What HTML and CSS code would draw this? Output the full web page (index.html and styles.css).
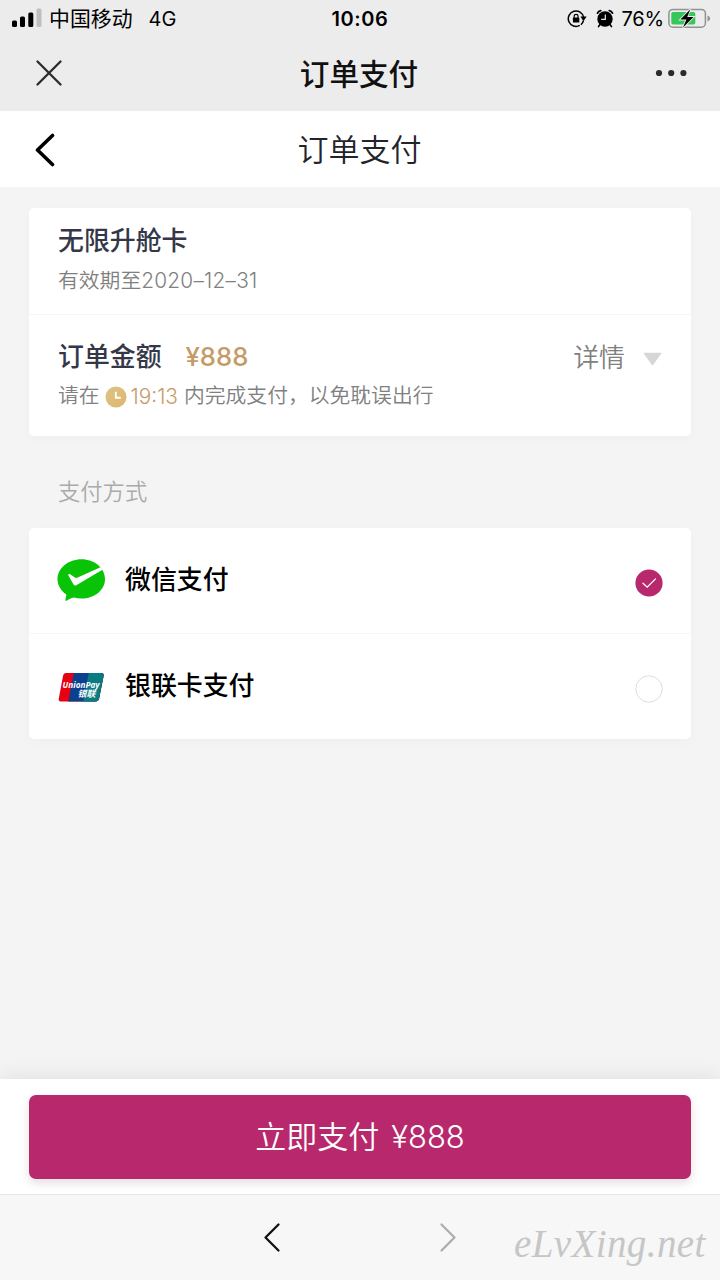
FILE: index.html
```html
<!DOCTYPE html>
<html lang="zh-CN">
<head>
<meta charset="utf-8">
<title>订单支付</title>
<link rel="stylesheet" href="styles.css">
</head>
<body>
<div class="app">
  <header class="system">
    <div class="status">
      <div class="status-left">
        <svg class="signal" width="30" height="20" viewBox="0 0 30 20"><rect x="0" y="12.5" width="5" height="6.5" rx="1.5"/><rect x="8" y="8.5" width="5" height="10.5" rx="1.5"/><rect x="16.3" y="4.5" width="5" height="14.5" rx="1.5"/><rect x="24.5" y="0.5" width="5" height="18.5" rx="1.5" fill="#bfbfbf"/></svg>
        <span class="carrier">中国移动</span><span class="network">4G</span>
      </div>
      <div class="time">10:06</div>
      <div class="status-right">
        <svg width="20" height="20" viewBox="0 0 20 20"><path d="M12.8 16.4A7.7 7.7 0 1 1 16.6 8.4" fill="none" stroke="#000" stroke-width="1.5"/><path d="M13.9 15.8A7.7 7.7 0 0 0 16.4 11.8" fill="none" stroke="#000" stroke-width="1.5"/><path d="M13.400 7.600h6.200l-3.100 4.700z"/><rect x="5.9" y="8.6" width="6.4" height="5" rx=".7"/><path d="M7.2 9V7.3a1.9 1.9 0 0 1 3.8 0V9" fill="none" stroke="#000" stroke-width="1.2"/></svg>
        <svg class="alarm" width="18" height="20" viewBox="0 0 18 20"><circle cx="9" cy="10" r="7.700"/><path d="M1.500 4.100q1-2.100 3.200-2.500M16.500 4.100q-1-2.100-3.200-2.500" fill="none" stroke="#000" stroke-width="1.800" stroke-linecap="round"/><path d="m3.800 15.700-1.300 1.900M14.200 15.700l1.300 1.900" stroke="#000" stroke-width="1.600" stroke-linecap="round"/><path d="M9.300 5.400v5H5.200" fill="none" stroke="#ececec" stroke-width="1.200"/></svg>
        <span class="percent">76%</span>
        <svg class="battery" width="43" height="22" viewBox="0 0 43 22"><rect x=".9" y="1.4" width="36.500" height="17.800" rx="4" fill="none" stroke="#929292" stroke-width="1.500"/><rect x="3.300" y="4" width="24" height="12.600" rx="1.800" fill="#35c759"/><path d="M39.500 7.500v6c1.800-.8 2.600-1.800 2.600-3s-.8-2.200-2.600-3z" fill="#929292"/><path d="m22.400 1.200-10 10.400h6l-3.400 8 10.500-10.600h-6.300z" fill="#000" stroke="#ececec" stroke-width="1.800" paint-order="stroke"/></svg>
      </div>
    </div>
    <div class="navbar">
      <svg class="close" width="26" height="26" viewBox="0 0 26 26"><path d="M1.500 1.500 24.500 24.500M24.500 1.500 1.500 24.500" stroke="#2b2b2b" stroke-width="2.300" stroke-linecap="round"/></svg>
      <h1 class="nav-title">订单支付</h1>
      <svg class="more" width="32" height="8" viewBox="0 0 32 8" fill="#2b2b2b"><circle cx="4" cy="4" r="3.100"/><circle cx="16.200" cy="4" r="3.100"/><circle cx="28.400" cy="4" r="3.100"/></svg>
    </div>
  </header>

  <div class="page-header">
    <svg class="back" width="20" height="34" viewBox="0 0 20 34"><path d="M17.500 2.500 2.500 17l15 14.500" fill="none" stroke="#000" stroke-width="3.600" stroke-linecap="round" stroke-linejoin="round"/></svg>
    <h2 class="page-title">订单支付</h2>
  </div>

  <main class="content">
    <section class="card">
      <div class="product">
        <div class="label">无限升舱卡</div>
        <div class="note">有效期至<span class="date">2020–12–31</span></div>
      </div>
      <div class="order">
        <div class="amount-row">
          <span class="label">订单金额</span><span class="amount">¥888</span>
          <span class="detail">详情</span>
          <svg class="arrow" width="19" height="14" viewBox="0 0 19 14"><path d="M1 .7h17q.8 0 .3.7l-8 11.300q-.8 1.100-1.600 0L.7 1.400Q.2.700 1 .7z" fill="#d6d6d6"/></svg>
        </div>
        <div class="note deadline">
          <span>请在</span>
          <svg class="clock" width="22" height="22" viewBox="0 0 22 22"><defs><linearGradient id="gold" x1="0" y1="0" x2="1" y2="1"><stop offset="0" stop-color="#dcc387"/><stop offset="1" stop-color="#dfb66c"/></linearGradient></defs><circle cx="11" cy="11" r="10.500" fill="url(#gold)"/><path d="M10.800 5.700v6.100h5" fill="none" stroke="#fff" stroke-width="1.900"/></svg>
          <span class="countdown">19:13</span><span>内完成支付，以免耽误出行</span>
        </div>
      </div>
    </section>

    <h3 class="section-title">支付方式</h3>
    <section class="card methods">
      <div class="method">
        <svg class="logo wechat" width="49" height="44" viewBox="0 0 49 44"><path d="M24.500 1.200C37.500 1.200 48 10 48 21S37.500 40.600 24.500 40.600c-2.700 0-5.200-.3-7.500-1-2.800.6-5.200 2-7.500 3.100-.8.300-1.300-.1-1.100-.9l1-5.200C4 33 .5 27.400 .5 21 .5 10 11.500 1.200 24.500 1.200z" fill="#09c306"/><path d="M11.400 17.400c-.5-1.200.8-1.800 1.700-1.200l4.800 3.300c.8.500 1.800.5 2.800 0L43.500 9.300q1.300 1 2 2.400L19.700 26.900c-1.400.9-2.600.8-3.300-.6z" fill="#fff"/></svg>
        <span class="method-name">微信支付</span>
        <svg class="radio" width="28" height="28" viewBox="0 0 28 28"><circle cx="14" cy="14" r="13.600" fill="#b7296c"/><path d="m8 14.200 4.200 4 8.300-8.300" fill="none" stroke="#fff" stroke-width="1.300" stroke-linecap="round"/></svg>
      </div>
      <div class="method">
        <svg class="logo" width="49" height="44" viewBox="0 0 49 44"><defs><clipPath id="card-shape"><path d="M9 7h35q3.300 0 2.600 3l-4.500 22.600q-.6 3-3.600 3h-34q-3.400 0-2.700-3L6 10q.6-3 3-3z"/></clipPath></defs><g clip-path="url(#card-shape)"><path d="M0 6h49v31H0z" fill="#e60012"/><path d="M17 6h32v31H11z" fill="#0b408f"/><path d="M32 6h17v31H26z" fill="#087c80"/></g><text class="up-latin" x="5.600" y="21.500" textLength="37" lengthAdjust="spacingAndGlyphs">UnionPay</text><text class="up-cjk" x="20.500" y="31" textLength="18" lengthAdjust="spacingAndGlyphs">银联</text></svg>
        <span class="method-name">银联卡支付</span>
        <svg class="radio" width="28" height="28" viewBox="0 0 28 28"><circle cx="14" cy="14" r="13.200" fill="#fff" stroke="#dedede"/></svg>
      </div>
    </section>
  </main>

  <div class="pay-bar"><div class="pay-button"><span class="pay-label">立即支付</span><span class="pay-price">¥888</span></div></div>
  <footer class="toolbar">
    <svg width="18" height="32" viewBox="0 0 18 32"><path d="M15.500 2.500 2.500 15.500l13 13" fill="none" stroke="#111" stroke-width="2.300" stroke-linecap="round" stroke-linejoin="round"/></svg>
    <svg width="18" height="32" viewBox="0 0 18 32"><path d="m2.500 2.500 13 13-13 13" fill="none" stroke="#adadad" stroke-width="2.300" stroke-linecap="round" stroke-linejoin="round"/></svg>
    <span class="watermark">eLvXing.net</span>
  </footer>
</div>
</body>
</html>
```
FILE: styles.css
```css
* { box-sizing: border-box; }
body { margin: 0; font-family: Inter, "Noto Sans CJK SC", sans-serif; color: #000; }
h1, h2, h3 { margin: 0; }
svg { display: block; flex: none; }
.app { width: 720px; height: 1280px; display: flex; flex-direction: column; background: #f4f4f4; overflow: hidden; white-space: nowrap; }

.system { height: 111px; background: #ececec; }
.status { height: 37px; display: grid; grid-template-columns: 1fr auto 1fr; align-items: center; font-size: 20px; line-height: 36px; }
.status-left, .status-right { display: flex; align-items: center; }
.status-left { padding-left: 12px; }
.signal { margin-top: -2px; }
.carrier { margin-left: 7px; font-size: 20.9px; }
.network { margin-left: 16px; }
.time { font-weight: 600; letter-spacing: .6px; }
.status-right { justify-content: flex-end; padding-right: 9px; }
.alarm { margin-left: 9px; }
.percent { margin-left: 8px; letter-spacing: -.2px; }
.battery { margin-left: 4px; }

.navbar { height: 74px; padding: 0 33px 2px 36px; display: grid; grid-template-columns: 1fr auto 1fr; align-items: center; }
.nav-title { margin: 1px 5px 0 0; font-size: 29.6px; line-height: 44px; font-weight: 500; color: #111; }
.more { justify-self: end; }

.page-header { height: 76px; padding: 1px 36px 0 35px; display: grid; grid-template-columns: 1fr auto 1fr; align-items: center; background: #fff; }
.page-title { font-size: 31px; line-height: 46px; font-weight: 350; color: #22242c; }

.content { flex: 1; padding: 21px 29px 0; }
.card { background: #fff; border-radius: 5px; box-shadow: 0 3px 12px rgba(0, 0, 0, .025); }
.product { height: 107px; padding: 14px 29px 0; border-bottom: 1px solid #f5f5f5; }
.label { font-size: 25.9px; line-height: 38px; font-weight: 500; color: #343747; }
.note { margin-top: 6px; font-size: 20.8px; line-height: 30px; font-weight: 350; color: #808080; }
.date { letter-spacing: .25px; }
.order { height: 121px; padding: 23px 29px 0; }
.amount-row { display: flex; align-items: center; }
.amount { margin-left: 24px; font-size: 25.7px; line-height: 38px; font-weight: 500; color: #c49b67; }
.detail { margin: 2px 0 0 auto; font-size: 25.9px; line-height: 36px; font-weight: 350; color: #808080; }
.arrow { margin: 4px 0 0 18px; }
.deadline { margin-top: 5px; display: flex; align-items: center; }
.clock { margin: 2px 4px 0 5px; }
.countdown { margin: 2px 6px 0 0; line-height: 28px; color: #c49b67; }

.section-title { height: 92px; padding: 38px 29px 0; font-size: 22.3px; line-height: 36px; font-weight: 350; color: #aaa; }
.method { height: 105px; padding: 0 28px; display: flex; align-items: center; }
.method:first-child { height: 106px; border-bottom: 1px solid #f6f6f6; }
.method-name { margin: 0 auto 2px 19px; font-size: 25.9px; line-height: 38px; font-weight: 500; }
.wechat { margin-bottom: 2px; }
.logo:not(.wechat) { margin-top: 2px; }
.radio { margin-top: 4px; }
.up-latin { font: italic 700 8.5px "Open Sans", sans-serif; fill: #fff; }
.up-cjk { font: italic 700 9px "Noto Sans CJK SC", sans-serif; fill: #fff; }

.pay-bar { height: 115px; padding: 16px 29px 0; background: #fff; box-shadow: 0 -2px 20px rgba(50, 50, 70, .10); }
.pay-button { height: 84px; display: flex; align-items: center; justify-content: center; gap: 12px; border-radius: 7px; background: #b7296c; box-shadow: 0 4px 10px rgba(80, 20, 50, .14); color: #fff; font-size: 31px; line-height: 46px; font-weight: 350; }
.pay-label { margin-bottom: 1px; }
.pay-price { font-weight: 300; }
.toolbar { position: relative; height: 86px; padding-left: 263px; display: flex; align-items: center; gap: 158px; background: #f7f7f7; border-top: 1px solid #e5e5e5; }
.watermark { position: absolute; left: 514px; top: 28px; font: italic 39px/42px "Liberation Serif", serif; letter-spacing: .4px; color: #c6c6c6; }
```
